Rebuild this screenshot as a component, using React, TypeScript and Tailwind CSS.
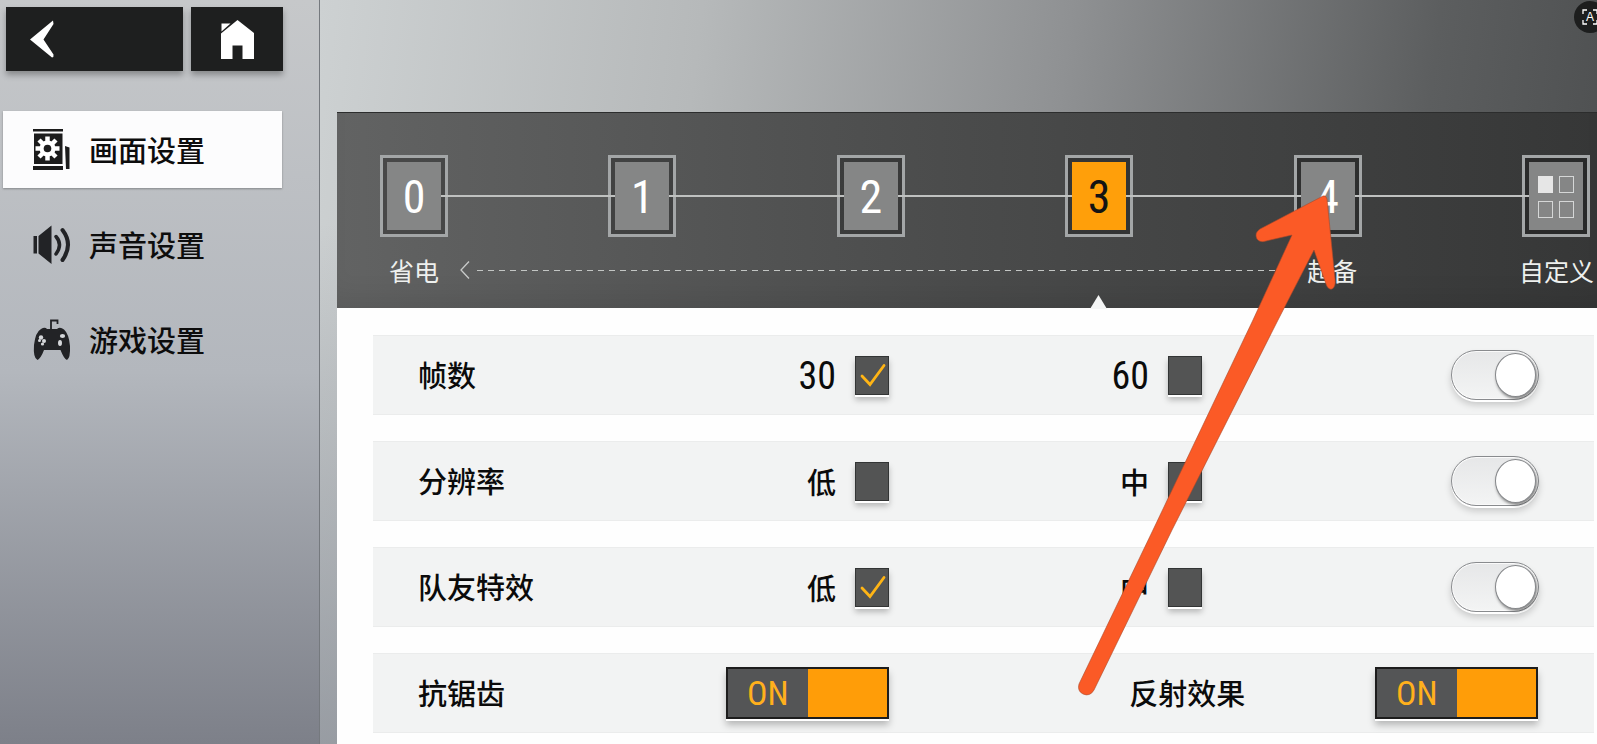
import { useState } from "react";
import type { ReactNode } from "react";

const BackIcon = () => (
  <svg width="24" height="38" viewBox="0 0 24 38" aria-hidden="true">
    <path d="M23 0.5 L0 19.5 L22 37.5 Q24 37 23.5 34.5 L13.5 19.5 L23.5 4 Z" fill="#fff" />
  </svg>
);

const HomeIcon = () => (
  <svg width="33" height="39" viewBox="0 0 33 39" aria-hidden="true">
    <path d="M0.500 3.500 H9.500 L0.500 11.500 Z" fill="#fff" />
    <path d="M16.5 0 L33 13 V39 H21.5 V25.500 H11.5 V39 H0 V13.500 Z" fill="#fff" />
  </svg>
);

const ScreenIcon = () => (
  <svg width="38" height="42" viewBox="0 0 38 42" aria-hidden="true">
    <path d="M0 0 H30 V2.5 H0 Z M1 4.500 H29.500 V35 H1 Z M0 37 H30 V41 H0 Z M32 17 L36.500 18.500 V40 H33 Z" fill="#1c1c1c" />
    <g transform="translate(14.500 19.500)">
      <g stroke="#fff" strokeWidth="4.500">
        <path d="M0 -12 V12" />
        <path d="M0 -12 V12" transform="rotate(45)" />
        <path d="M0 -12 V12" transform="rotate(90)" />
        <path d="M0 -12 V12" transform="rotate(135)" />
      </g>
      <circle r="8" fill="#fff" />
      <circle r="3.800" fill="#1c1c1c" />
    </g>
  </svg>
);

const SoundIcon = () => (
  <svg width="38" height="40" viewBox="0 0 38 40" aria-hidden="true">
    <path d="M0.500 11 H4 V28.500 H0.500 Z M5.500 11 L18.500 0.500 V39 L5.500 28.500 Z" fill="#222326" />
    <path d="M23 11.500 Q30 19.500 23 29" fill="none" stroke="#222326" strokeWidth="3.500" strokeLinecap="round" />
    <path d="M29.500 5 Q40.500 19.500 29.500 35" fill="none" stroke="#222326" strokeWidth="4" strokeLinecap="round" />
  </svg>
);

const GamepadIcon = () => (
  <svg width="38" height="42" viewBox="0 0 38 42" aria-hidden="true">
    <path d="M18 10 V1.500 H24.500 V5" fill="none" stroke="#222326" strokeWidth="1.800" />
    <path
      d="M8 10 Q12 7.500 14 10 H24 Q27 7.500 31 10.500 Q36 15 37 27 Q37.500 39 34 41 Q31 40 27.500 31 H11 Q8 39 4.500 41 Q0 39 1 26 Q2.500 13 8 10 Z"
      fill="#222326"
    />
    <g fill="#d5d7da">
      <circle cx="8" cy="18.500" r="2.200" />
      <circle cx="6.500" cy="21.500" r="1.500" />
      <circle cx="11" cy="22" r="2" />
      <circle cx="9.500" cy="25" r="1.600" />
      <ellipse cx="29.500" cy="17" rx="2.600" ry="2" />
      <ellipse cx="27" cy="24" rx="2" ry="3" />
    </g>
  </svg>
);

const CustomIcon = () => (
  <span className="grid grid-cols-2 gap-x-[6px] gap-y-[8px]">
    <span className="h-[17px] w-[15px] bg-[#e6e6e6]" />
    <span className="h-[17px] w-[15px] border border-[#d5d7d7]" />
    <span className="h-[17px] w-[15px] border border-[#d5d7d7]" />
    <span className="h-[17px] w-[15px] border border-[#d5d7d7]" />
  </span>
);

const menu = [
  { id: "screen", title: "画面设置", icon: <ScreenIcon /> },
  { id: "sound", title: "声音设置", icon: <SoundIcon /> },
  { id: "game", title: "游戏设置", icon: <GamepadIcon /> },
];

const Sidebar = () => {
  const [active, setActive] = useState("screen");

  return (
    <aside className="w-[320px] shrink-0 border-r border-[#75797e] bg-linear-to-b from-[#c6c8ca] via-[#b3b7bd] to-[#7d8089] pt-[7px] shadow-[1px_0_0_#c8cccf]">
      <div className="flex gap-2 pr-[36px] pl-[6px]">
        <button
          aria-label="返回"
          className="flex h-[64px] flex-1 items-center bg-[#1e1f1f] pl-[24px] shadow-[0_4px_6px_rgba(0,0,0,0.3)]"
        >
          <BackIcon />
        </button>
        <button
          aria-label="主页"
          className="flex h-[64px] w-[92px] items-center justify-center bg-[#1e1f1f] shadow-[0_4px_6px_rgba(0,0,0,0.3)]"
        >
          <HomeIcon />
        </button>
      </div>
      <nav className="mt-[40px] flex flex-col gap-[18px] pr-[37px] pl-[3px]">
        {menu.map((item) => (
          <button
            key={item.id}
            onClick={() => setActive(item.id)}
            className={`flex h-[77px] items-center gap-[18px] pl-[30px] text-[29px] font-medium text-[#0d0d0d] ${
              active === item.id ? "bg-[#fcfcfd] shadow-[0_1px_2px_rgba(0,0,0,0.3)]" : ""
            }`}
          >
            {item.icon}
            {item.title}
          </button>
        ))}
      </nav>
    </aside>
  );
};

const steps: { id: string; content: ReactNode }[] = [
  { id: "0", content: "0" },
  { id: "1", content: "1" },
  { id: "2", content: "2" },
  { id: "3", content: "3" },
  { id: "4", content: "4" },
  { id: "custom", content: <CustomIcon /> },
];

const QualitySteps = () => {
  const [level, setLevel] = useState("3");

  return (
    <div className="h-[196px] border-t border-[#2c2d2d] bg-linear-to-r from-[#626363] via-[#4a4b4b] to-[#363737] pt-[42px] pr-[7px] pl-[43px] shadow-[inset_0_-24px_24px_-12px_rgba(0,0,0,0.08)]">
      <div className="flex items-center">
        {steps.map((step, i) => (
          <div key={step.id} className={`flex items-center ${i > 0 ? "flex-1" : ""}`}>
            {i > 0 && <span className="z-10 -mx-[7px] h-[2px] flex-1 bg-[#bfc1c0]" />}
            <button
              aria-label={step.id === "custom" ? "自定义" : undefined}
              aria-pressed={level === step.id}
              onClick={() => setLevel(step.id)}
              className="relative h-[82px] w-[68px] border-[3px] border-[#a3a6a7] bg-black/25 p-[4px]"
            >
              <span
                className={`flex h-full w-full items-center justify-center pt-[2px] font-['Liberation_Sans_Narrow','Roboto_Condensed','Roboto',sans-serif] text-[46px] font-normal ${
                  level === step.id ? "bg-[#ff9f0a] text-[#141414]" : "bg-[#858686] text-white"
                }`}
              >
                {step.content}
              </span>
              {level === step.id && (
                <svg className="absolute top-[137px] left-[22px]" width="17" height="14" viewBox="0 0 17 14" aria-hidden="true">
                  <path d="M8.500 0 L17 14 H0 Z" fill="#f4f5f5" />
                </svg>
              )}
            </button>
          </div>
        ))}
      </div>
      <div className="mt-[14px] flex text-[25px] leading-[38px] text-[#eef0ee]">
        <div className="flex flex-[974] items-center pl-[9px]">
          <span>省电</span>
          <svg className="ml-[21px]" width="10" height="18" viewBox="0 0 10 18" aria-hidden="true">
            <path d="M9 0.500 L1 9 L9 17.500" fill="none" stroke="#c9cbca" strokeWidth="1.300" />
          </svg>
          <span className="mr-[7px] ml-[7px] h-px flex-1 bg-[repeating-linear-gradient(to_right,#c3c6c4_0_6px,transparent_6px_11px)]" />
          <span>超备</span>
        </div>
        <span className="-mr-[4px] flex-[238] text-right">自定义</span>
      </div>
    </div>
  );
};

const CheckOption = ({ label, defaultChecked }: { label: string; defaultChecked?: boolean }) => (
  <label className="flex cursor-pointer items-center gap-[19px] text-[29px]">
    <span
      className={
        /^\d+$/.test(label)
          ? "pt-[2px] font-['Liberation_Sans_Narrow','Roboto_Condensed','Roboto',sans-serif] text-[38px] leading-[40px] font-normal"
          : "leading-[40px]"
      }
    >
      {label}
    </span>
    <span className="grid">
      <input
        type="checkbox"
        defaultChecked={defaultChecked}
        className="peer col-start-1 row-start-1 h-[39px] w-[34px] appearance-none border border-[#333535] bg-[#535454] shadow-[0_2px_0_#fff,0_5px_6px_rgba(0,0,0,0.25)]"
      />
      <svg
        className="pointer-events-none invisible col-start-1 row-start-1 peer-checked:visible"
        width="34"
        height="39"
        viewBox="0 0 34 39"
        aria-hidden="true"
      >
        <path d="M7 20 L15 28.500 L29 9.500" fill="none" stroke="#ffb515" strokeWidth="2.800" strokeLinecap="round" />
      </svg>
    </span>
  </label>
);

const RoundSwitch = ({ label }: { label: string }) => (
  <input
    type="checkbox"
    role="switch"
    aria-label={label}
    defaultChecked
    className="h-[50px] w-[88px] cursor-pointer appearance-none rounded-full border border-[#898b8e] bg-linear-to-b from-[#e6e7e8] to-[#f3f4f4] p-[2px] shadow-[inset_0_0_0_1px_#fafafa,0_2px_0_#fff,0_5px_7px_rgba(0,0,0,0.18)] before:block before:h-[44px] before:w-[41px] before:rounded-[50%] before:border before:border-[#85878a] before:bg-white before:shadow-[1px_2px_3px_rgba(0,0,0,0.45)] checked:before:ml-auto"
  />
);

const OnSwitch = ({ label }: { label: string }) => {
  const [on, setOn] = useState(true);

  return (
    <button
      role="switch"
      aria-checked={on}
      aria-label={label}
      onClick={() => setOn(!on)}
      className="flex h-[52px] w-[163px] border-2 border-[#1d1d1d] bg-[#545556] shadow-[0_2px_0_#fff,0_6px_7px_rgba(0,0,0,0.25)]"
    >
      <span className="flex h-full flex-1 items-center justify-center font-['Liberation_Sans_Narrow','Roboto_Condensed','Roboto',sans-serif] text-[34px] font-normal text-[#ffb01c]">
        {on ? "ON" : "OFF"}
      </span>
      <span className={`h-full flex-1 ${on ? "bg-[#ff9d08]" : "bg-[#8a8a8a]"}`} />
    </button>
  );
};

const rows = [
  { title: "帧数", low: "30", high: "60", checked: true },
  { title: "分辨率", low: "低", high: "中", checked: false },
  { title: "队友特效", low: "低", high: "中", checked: true },
];

const SettingsList = () => (
  <div className="flex flex-1 flex-col gap-[26px] bg-[#fefefe] pt-[27px] pr-[3px] pb-[11px] pl-[36px] text-[29px] font-medium text-[#0b0b0b]">
    {rows.map((row) => (
      <div
        key={row.title}
        className="grid h-[80px] grid-cols-[516fr_313fr_337fr_55fr] items-center border-y border-[#ebecec] bg-[#f2f3f3]"
      >
        <div className="flex items-center justify-between pl-[45px]">
          <span>{row.title}</span>
          <CheckOption label={row.low} defaultChecked={row.checked} />
        </div>
        <div className="flex justify-end">
          <CheckOption label={row.high} />
        </div>
        <div className="flex justify-end">
          <RoundSwitch label={row.title} />
        </div>
      </div>
    ))}
    <div className="grid h-[80px] grid-cols-[516fr_649fr_56fr] items-center border-y border-[#ebecec] bg-[#f2f3f3]">
      <div className="flex items-center justify-between pl-[45px]">
        <span>抗锯齿</span>
        <OnSwitch label="抗锯齿" />
      </div>
      <div className="flex items-center justify-between pl-[37%]">
        <span>反射效果</span>
        <OnSwitch label="反射效果" />
      </div>
    </div>
  </div>
);

const PointerArrow = () => (
  <svg
    className="pointer-events-none absolute top-[190px] left-[1070px] z-20"
    width="275"
    height="510"
    viewBox="1070 190 275 510"
    aria-hidden="true"
  >
    <path
      d="M1323 196 L1260 229 Q1254 233 1257 239 Q1260 243 1266 241 L1292 235 L1253 320 L1153 530 L1079 684 Q1077 691 1083 694 Q1090 697 1094 690 L1172 530 L1278 320 L1314 250 L1326 284 Q1328 290 1332 289 Q1336 287 1335 279 L1327 199 Q1326 195 1323 196 Z"
      fill="#fb5a26"
      stroke="#a94a2b"
      strokeWidth="0.600"
    />
  </svg>
);

export default function App() {
  return (
    <div className="relative flex min-h-screen overflow-hidden bg-[#a5a9b0] font-['Noto_Sans_CJK_SC',sans-serif]">
      <Sidebar />
      <main className="flex min-w-0 flex-1 flex-col bg-[linear-gradient(to_bottom,transparent_30%,rgba(120,125,135,0.6)_100%),linear-gradient(97deg,#cdd1d2_0%,#b6b9ba_28%,#8f9193_55%,#5c5e5f_82%,#4a4c4d_100%)] pt-[112px] pl-[17px]">
        <QualitySteps />
        <SettingsList />
      </main>
      <button
        aria-label="识别文字"
        className="absolute top-[1px] -right-[9px] flex h-[32px] w-[32px] items-center justify-center rounded-full bg-[#1d1e1e] text-white"
      >
        <svg width="16" height="16" viewBox="0 0 16 16" aria-hidden="true">
          <path d="M1 5 V1 H5 M11 1 H15 V5 M15 11 V15 H11 M5 15 H1 V11" fill="none" stroke="#fff" strokeWidth="1.300" />
          <text x="8" y="12" textAnchor="middle" fontSize="12" fill="#fff" fontFamily="Liberation Sans">
            A
          </text>
        </svg>
      </button>
      <PointerArrow />
    </div>
  );
}
